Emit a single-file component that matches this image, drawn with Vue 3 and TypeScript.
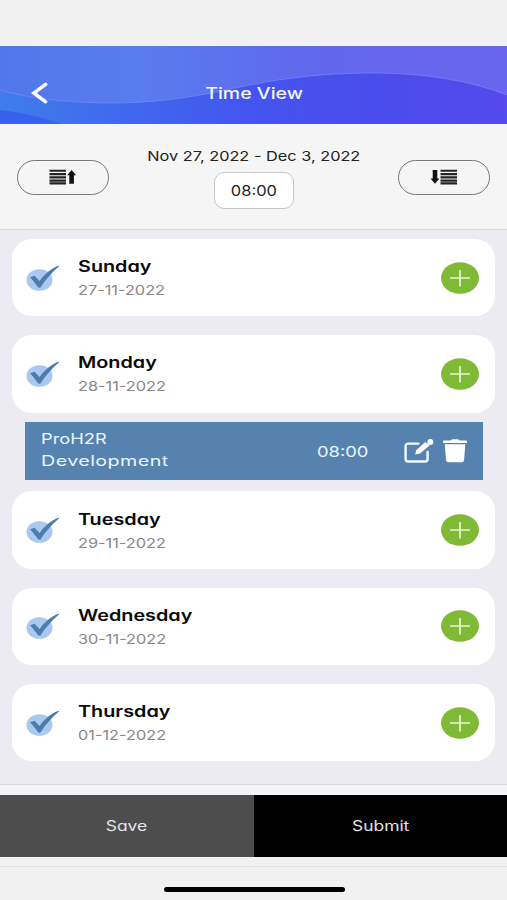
<script setup lang="ts">
interface Task {
  project: string
  activity: string
  hours: string
}
interface Day {
  name: string
  date: string
  tasks: Task[]
}

const days: Day[] = [
  { name: 'Sunday', date: '27-11-2022', tasks: [] },
  {
    name: 'Monday',
    date: '28-11-2022',
    tasks: [{ project: 'ProH2R', activity: 'Development', hours: '08:00' }],
  },
  { name: 'Tuesday', date: '29-11-2022', tasks: [] },
  { name: 'Wednesday', date: '30-11-2022', tasks: [] },
  { name: 'Thursday', date: '01-12-2022', tasks: [] },
]
</script>

<template>
  <div class="screen">
    <div class="status-bar"></div>

    <header class="header">
      <svg class="waves" viewBox="0 0 507 78" preserveAspectRatio="none" aria-hidden="true">
        <defs>
          <linearGradient id="sky" x1="0" y1="0" x2="1" y2="0">
            <stop offset="0" stop-color="#5078ea" />
            <stop offset="0.28" stop-color="#597cee" />
            <stop offset="0.6" stop-color="#6068ec" />
            <stop offset="1" stop-color="#6965ee" />
          </linearGradient>
          <linearGradient id="sea" x1="0" y1="0" x2="1" y2="0">
            <stop offset="0" stop-color="#3f7de9" />
            <stop offset="0.25" stop-color="#4068ef" />
            <stop offset="0.5" stop-color="#4554ee" />
            <stop offset="0.75" stop-color="#4a4cec" />
            <stop offset="1" stop-color="#554aeb" />
          </linearGradient>
        </defs>
        <rect width="507" height="78" fill="url(#sky)" />
        <path
          d="M0 44C28 52 67 57 112 57C163 57 203 49 240 41C279 33 319 27 374 27C422 27 469 34 507 49V78H0Z"
          fill="url(#sea)"
        />
        <path
          d="M0 44C28 52 67 57 112 57C163 57 203 49 240 41C279 33 319 27 374 27C422 27 469 34 507 49"
          fill="none"
          stroke="#7c8bf8"
          stroke-opacity="0.65"
        />
        <path d="M0 64C20 66 42 71 61 78H0Z" fill="#3561ee" />
      </svg>
      <svg class="back" viewBox="0 0 18 22" aria-label="Back">
        <path d="M14.6 2.3L2.8 11L14.6 19.8" fill="none" stroke="#fff" stroke-width="3.5" stroke-linecap="round" />
      </svg>
      <h1 class="title"><span class="wide">Time View</span></h1>
    </header>

    <section class="toolbar">
      <button class="pill" aria-label="Previous week">
        <svg class="sort" viewBox="0 0 28 16">
          <path d="M0.5 1.8H17M0.5 5.1H17M0.5 8.4H17M0.5 11.6H17M0.5 14.4H17" stroke="#222" stroke-width="2.1" />
          <path d="M22.6 1L27.1 6.2H24.9V14.8H20.3V6.2H18.1Z" fill="#111" />
        </svg>
      </button>
      <div class="period">
        <div class="range"><span class="wide">Nov 27, 2022 - Dec 3, 2022</span></div>
        <div class="total"><span class="wide">08:00</span></div>
      </div>
      <button class="pill" aria-label="Next week">
        <svg class="sort" viewBox="0 0 28 16">
          <path d="M10.5 1.8H27M10.5 5.1H27M10.5 8.4H27M10.5 11.6H27M10.5 14.4H27" stroke="#222" stroke-width="2.1" />
          <path d="M2.7 1H7.3V9.5H9.5L5 14.8L0.5 9.5H2.7Z" fill="#111" />
        </svg>
      </button>
    </section>

    <main class="list">
      <template v-for="day in days" :key="day.date">
        <article class="card">
          <svg class="check" viewBox="0 0 34 28" aria-hidden="true">
            <ellipse cx="13.5" cy="16" rx="13" ry="10.8" fill="#a9c9ef" />
            <path
              d="M4.3 13.2L8.4 11.7L13.6 16.9C18.5 10.2 25 4.3 32.6 1.7L33 2.6C26.5 7.6 20.2 15 14.2 23.7H12.6Z"
              fill="#4c7cab"
            />
          </svg>
          <div class="info">
            <h2 class="day"><span class="wide">{{ day.name }}</span></h2>
            <p class="date"><span class="wide">{{ day.date }}</span></p>
          </div>
          <button class="add" aria-label="Add entry">
            <svg viewBox="0 0 38 32">
              <ellipse cx="19" cy="16" rx="19" ry="15.8" fill="#7fb936" />
              <path d="M9 16H29M19 8V24.5" stroke="#e4f8cf" stroke-width="1.7" />
            </svg>
          </button>
        </article>
        <div v-for="task in day.tasks" :key="task.project" class="task">
          <div class="task-name">
            <div class="project"><span class="wide">{{ task.project }}</span></div>
            <div class="activity"><span class="wide">{{ task.activity }}</span></div>
          </div>
          <div class="hours"><span class="wide">{{ task.hours }}</span></div>
          <svg class="edit" viewBox="0 0 30 26" aria-label="Edit">
            <path
              d="M14.5 5.6H4.2Q1.6 5.6 1.6 8.2V20.9Q1.6 23.5 4.2 23.5H21Q23.6 23.5 23.6 20.9V14"
              fill="none"
              stroke="#f3faff"
              stroke-width="2.4"
              stroke-linecap="round"
            />
            <path d="M21.3 4L25.6 7.4L16 15.6L11.2 16.6L12.2 12.2Z" fill="#fff" />
            <circle cx="26.3" cy="4" r="3" fill="#fff" />
          </svg>
          <svg class="trash" viewBox="0 0 24 24" aria-label="Delete">
            <path
              d="M1 1.5H7.5L9.2 .3H15L16.6 1.5H23Q24 1.5 24 2.5V4H0V2.5Q0 1.5 1 1.5ZM1.8 5.2H22.3L21.1 21Q20.9 23.2 18.7 23.2H5.4Q3.2 23.2 3 21Z"
              fill="#fff"
            />
          </svg>
        </div>
      </template>
    </main>

    <div class="divider"></div>
    <footer class="actions">
      <button class="save"><span class="wide">Save</span></button>
      <button class="submit"><span class="wide">Submit</span></button>
    </footer>
    <div class="home"><div class="indicator"></div></div>
  </div>
</template>

<style>
body {
  margin: 0;
  background: #f1f1f1;
}
</style>

<style scoped>
.screen {
  width: 507px;
  height: 900px;
  display: flex;
  flex-direction: column;
  overflow: hidden;
  background: #f1f1f1;
  color: #222;
  font-family: Inter, 'Open Sans', sans-serif;
  font-feature-settings: 'cv11';
}
.screen * {
  box-sizing: border-box;
}
h1,
h2,
p {
  margin: 0;
}
button {
  padding: 0;
  border: 0;
  background: none;
  font: inherit;
  font-feature-settings: inherit;
  color: inherit;
}
svg {
  display: block;
}
.wide {
  display: inline-block;
  white-space: nowrap;
  transform: scaleX(1.2);
}
.status-bar {
  flex: none;
  height: 46px;
}
.header {
  flex: none;
  height: 78px;
  display: grid;
  grid-template-columns: 66px 1fr 66px;
  align-items: center;
}
.header > * {
  grid-row: 1;
}
.waves {
  grid-column: 1 / -1;
  width: 507px;
  height: 78px;
}
.back {
  grid-column: 1;
  width: 18px;
  height: 22px;
  margin: 16px 0 0 31px;
}
.title {
  grid-column: 2;
  padding: 16px 0 0 1px;
  text-align: center;
  font-size: 16px;
  line-height: 22px;
  font-weight: 500;
  color: #f3f6ff;
}
.title .wide {
  transform: scaleX(1.22);
}
.toolbar {
  flex: none;
  height: 106px;
  display: flex;
  justify-content: space-between;
  padding: 0 17px;
  background: #f5f5f5;
  border-bottom: 1.5px solid #dddce0;
}
.pill {
  width: 92px;
  height: 35px;
  margin-top: 35.5px;
  display: flex;
  align-items: center;
  justify-content: center;
  border: 1px solid #777;
  border-radius: 18px;
}
.sort {
  width: 28px;
  height: 16px;
}
.period {
  display: flex;
  flex-direction: column;
  align-items: center;
}
.range {
  padding-top: 22px;
  font-size: 13.6px;
  line-height: 20px;
}
.total {
  width: 80px;
  height: 37px;
  margin-top: 6px;
  border: 1px solid #c6c6c6;
  border-radius: 10px;
  background: #fff;
  text-align: center;
  font-size: 14.2px;
  line-height: 36px;
}
.total .wide {
  transform: scaleX(1.16);
}
.list {
  flex: none;
  height: 554px;
  padding: 9px 12px 0;
  background: #edebf2;
}
.card {
  height: 77.3px;
  margin-bottom: 19px;
  padding: 0 16px 0 14px;
  display: flex;
  align-items: center;
  border-radius: 20px;
  background: #fff;
}
.check {
  width: 34px;
  height: 28px;
}
.info {
  flex: 1;
  padding: 2px 0 0 18px;
}
.info .wide,
.task-name .wide {
  transform-origin: left;
}
.day {
  font-size: 15.6px;
  line-height: 23px;
  font-weight: 600;
  color: #080808;
}
.day .wide {
  transform: scaleX(1.27);
}
.date {
  font-size: 13.6px;
  line-height: 24px;
  color: #888;
}
.add {
  width: 38px;
  height: 32px;
}
.task {
  height: 58px;
  margin: -9.2px 12px 11px 13px;
  padding: 0 16px;
  display: flex;
  align-items: center;
  background: #5682b0;
  color: #e8f5ff;
}
.task-name {
  flex: 1;
  padding-bottom: 3px;
  font-size: 14.5px;
  line-height: 22px;
}
.project .wide {
  transform: scaleX(1.26);
}
.activity .wide {
  letter-spacing: 0.3px;
  transform: scaleX(1.36);
}
.hours {
  width: 52px;
  padding-top: 1px;
  text-align: center;
  font-size: 14.8px;
}
.hours .wide {
  transform: scaleX(1.24);
}
.edit {
  width: 30px;
  height: 26px;
  margin-left: 35px;
}
.trash {
  width: 24px;
  height: 24px;
  margin-left: 9px;
}
.divider {
  flex: none;
  height: 11px;
  border-top: 1.5px solid #d8d7dc;
  background: #f4f3f6;
}
.actions {
  flex: none;
  height: 62px;
  display: grid;
  grid-template-columns: 1fr 1fr;
  font-size: 13.8px;
  color: #e6e6e6;
}
.actions .wide {
  transform: scaleX(1.26);
}
.save {
  background: #4d4d4d;
}
.submit {
  background: #000;
}
.home {
  flex: 1;
  margin-top: 9px;
  display: flex;
  justify-content: center;
  align-items: flex-start;
  border-top: 1.5px solid #e2e2e2;
}
.indicator {
  width: 181px;
  height: 5px;
  margin: 20px 0 0 1px;
  border-radius: 3px;
  background: #000;
}
</style>
